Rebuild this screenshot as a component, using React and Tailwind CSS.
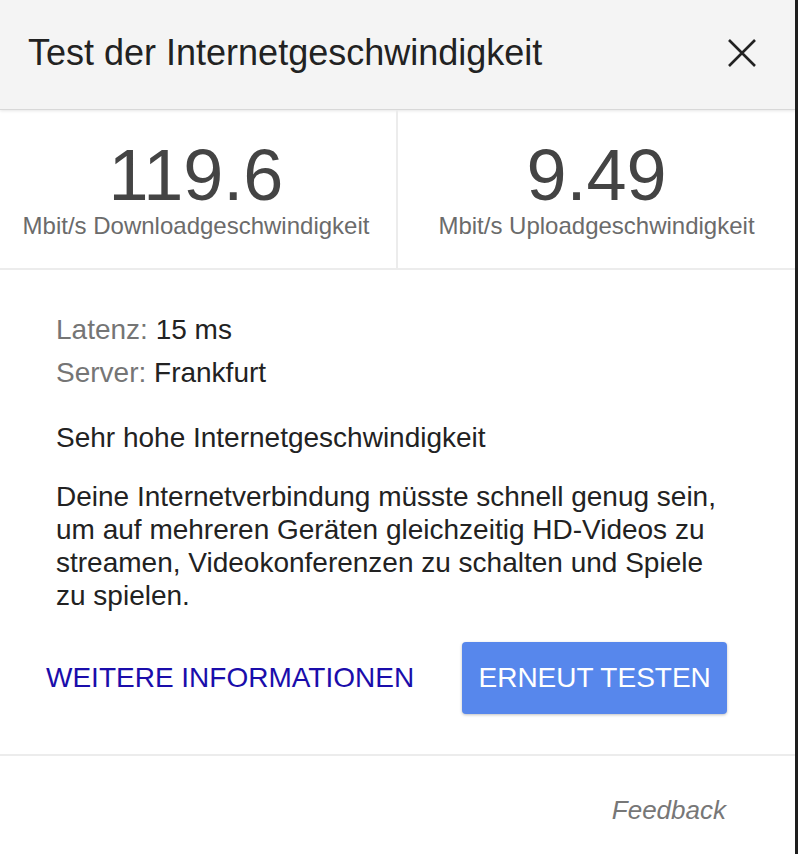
export default function App() {
  return (
    <div className="flex w-[798px] h-[854px] bg-white font-['Liberation_Sans',Arial,sans-serif]">
      <div className="w-[795px] h-full flex flex-col bg-white">
        {/* Header */}
        <div className="h-[110px] shrink-0 flex items-center justify-between pl-[28px] pr-[38px] bg-[#f4f4f4] border-b border-[#d8d8d8] shadow-[0_1px_3px_rgba(0,0,0,0.1)]">
          <h1 className="text-[36px] leading-none text-[#222] pb-[3px]">Test der Internetgeschwindigkeit</h1>
          <svg width="30" height="30" viewBox="0 0 30 30" className="mb-[4px]">
            <path d="M2 2 L28 28 M28 2 L2 28" stroke="#222" strokeWidth="2.6" fill="none" />
          </svg>
        </div>

        {/* Stats */}
        <div className="h-[160px] shrink-0 grid grid-cols-[398px_1fr] border-b-2 border-[#ececec]">
          <div className="flex flex-col items-center pt-[29px] pr-[4px] border-r-2 border-[#ececec]">
            <div className="text-[72px] leading-none text-[#444]">119.6</div>
            <div className="text-[24px] leading-none text-[#6b6b6b] mt-[3px]">Mbit/s Downloadgeschwindigkeit</div>
          </div>
          <div className="flex flex-col items-center pt-[29px]">
            <div className="text-[72px] leading-none text-[#444]">9.49</div>
            <div className="text-[24px] leading-none text-[#6b6b6b] mt-[3px]">Mbit/s Uploadgeschwindigkeit</div>
          </div>
        </div>

        {/* Details */}
        <div className="flex-1 flex flex-col pl-[56px] pr-[60px] pt-[43px] text-[28px] leading-[33px] text-[#222]">
          <div><span className="text-[#757575]">Latenz:</span> 15 ms</div>
          <div className="mt-[10px]"><span className="text-[#757575]">Server:</span> Frankfurt</div>
          <div className="mt-[32px]">Sehr hohe Internetgeschwindigkeit</div>
          <p className="mt-[26px] w-[672px]">
            Deine Internetverbindung müsste schnell genug sein, um auf mehreren Geräten gleichzeitig HD-Videos zu streamen, Videokonferenzen zu schalten und Spiele zu spielen.
          </p>
          <div className="flex items-center mt-[30px] -ml-[10px]">
            <a className="text-[28px] leading-none text-[#1a0dab]">WEITERE INFORMATIONEN</a>
            <button className="ml-[48px] w-[265px] h-[72px] rounded-[4px] bg-[#5787ec] text-white text-[28px] leading-none shadow-[0_1px_3px_rgba(0,0,0,0.25)]">
              ERNEUT TESTEN
            </button>
          </div>
        </div>

        {/* Footer */}
        <div className="h-[100px] shrink-0 border-t-2 border-[#ececec] flex justify-end items-start pt-[41px] pr-[69px]">
          <span className="italic text-[26px] leading-none text-[#777]">Feedback</span>
        </div>
      </div>
      <div className="w-[3px] h-full bg-[#1e1e1e]" />
    </div>
  );
}
